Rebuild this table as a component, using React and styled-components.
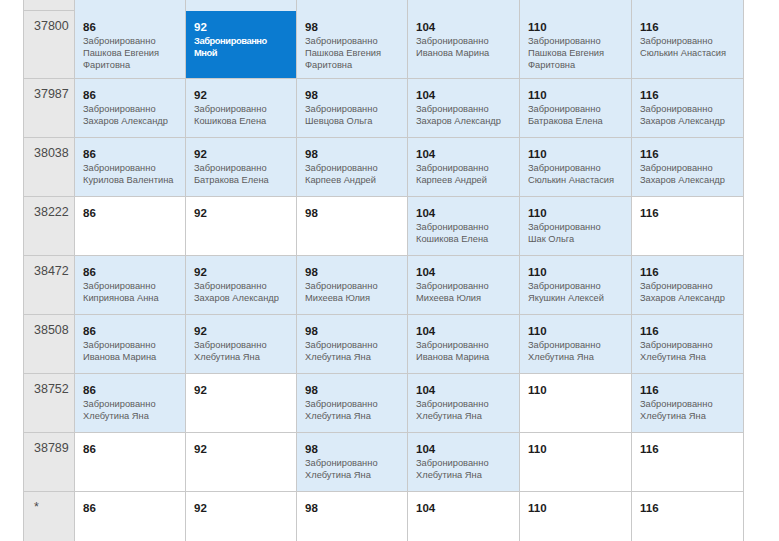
import React from 'react';
import styled, { createGlobalStyle } from 'styled-components';

const GlobalStyle = createGlobalStyle`
  html, body {
    margin: 0;
    padding: 0;
    background: #fff;
    font-family: "Liberation Sans", Arial, sans-serif;
  }
`;

const SEATS = [86, 92, 98, 104, 110, 116];
const BOOKED = 'Забронированно';

// null -> свободно, 'me' -> забронировано мной, строка -> кем забронировано
const ROWS = [
  {
    id: '37800',
    seats: ['Пашкова Евгения Фаритовна', 'me', 'Пашкова Евгения Фаритовна', 'Иванова Марина', 'Пашкова Евгения Фаритовна', 'Сюлькин Анастасия'],
  },
  {
    id: '37987',
    seats: ['Захаров Александр', 'Кошикова Елена', 'Шевцова Ольга', 'Захаров Александр', 'Батракова Елена', 'Захаров Александр'],
  },
  {
    id: '38038',
    seats: ['Курилова Валентина', 'Батракова Елена', 'Карпеев Андрей', 'Карпеев Андрей', 'Сюлькин Анастасия', 'Захаров Александр'],
  },
  {
    id: '38222',
    seats: [null, null, null, 'Кошикова Елена', 'Шак Ольга', null],
  },
  {
    id: '38472',
    seats: ['Киприянова Анна', 'Захаров Александр', 'Михеева Юлия', 'Михеева Юлия', 'Якушкин Алексей', 'Захаров Александр'],
  },
  {
    id: '38508',
    seats: ['Иванова Марина', 'Хлебутина Яна', 'Хлебутина Яна', 'Иванова Марина', 'Хлебутина Яна', 'Хлебутина Яна'],
  },
  {
    id: '38752',
    seats: ['Хлебутина Яна', null, 'Хлебутина Яна', 'Хлебутина Яна', null, 'Хлебутина Яна'],
  },
  {
    id: '38789',
    seats: [null, null, 'Хлебутина Яна', 'Хлебутина Яна', null, null],
  },
  {
    id: '*',
    seats: [null, null, null, null, null, null],
  },
];

const TONES = {
  free: { bg: '#ffffff', num: '#1c1c1c', sub: '#5c5c5c' },
  booked: { bg: '#dcebf8', num: '#1c1c1c', sub: '#5c5c5c' },
  mine: { bg: '#0b7bd0', num: '#ffffff', sub: '#ffffff' },
};

const Page = styled.div`
  padding-left: 23px;
  height: 541px;
  overflow: hidden;
`;

const Sheet = styled.div`
  display: grid;
  width: max-content;
  grid-template-columns: 50px 110px 110px 110px 111px 111px 111px;
  grid-template-rows: 10px auto;
  grid-auto-rows: minmax(58px, auto);
  gap: 1px;
  padding: 0 1px 1px 1px;
  background: #c9c9c9;
`;

const RowHead = styled.div`
  background: #e8e8e8;
  color: #4a4a4a;
  font-size: 12.5px;
  line-height: 14px;
  padding: 8px 0 0 10px;
`;

const Cell = styled.div`
  background: ${({ $tone }) => TONES[$tone].bg};
  padding: 9px 6px 7px 8px;
`;

const SeatNo = styled.div`
  font-size: 11.5px;
  line-height: 14px;
  font-weight: bold;
  color: ${({ $tone }) => TONES[$tone].num};
`;

const Note = styled.div`
  margin-top: 1px;
  font-size: 9.3px;
  line-height: 12px;
  color: ${({ $tone }) => TONES[$tone].sub};
  font-weight: ${({ $tone }) => ($tone === 'mine' ? 'bold' : 'normal')};
  letter-spacing: ${({ $tone }) => ($tone === 'mine' ? '-0.4px' : 'normal')};
`;

function Seat({ no, owner }) {
  const tone = owner === 'me' ? 'mine' : owner ? 'booked' : 'free';
  return (
    <Cell $tone={tone}>
      <SeatNo $tone={tone}>{no}</SeatNo>
      {owner && (
        <Note $tone={tone}>
          {BOOKED}
          <br />
          {owner === 'me' ? 'Мной' : owner}
        </Note>
      )}
    </Cell>
  );
}

export default function App() {
  return (
    <Page>
      <GlobalStyle />
      <Sheet>
        {/* хвост предыдущей строки, обрезан сверху */}
        <RowHead />
        {SEATS.map((s) => (
          <Cell key={'prev' + s} $tone="booked" />
        ))}
        {ROWS.map((row) => (
          <React.Fragment key={row.id}>
            <RowHead>{row.id}</RowHead>
            {row.seats.map((owner, i) => (
              <Seat key={SEATS[i]} no={SEATS[i]} owner={owner} />
            ))}
          </React.Fragment>
        ))}
      </Sheet>
    </Page>
  );
}
